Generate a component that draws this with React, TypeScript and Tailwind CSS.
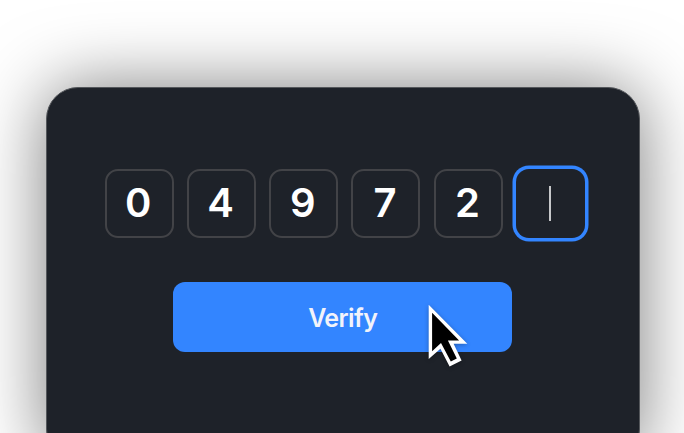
const digits = ["0", "4", "9", "7", "2"];

function Pointer() {
  return (
    <svg
      className="absolute left-[251px] top-[18px] h-[70px] w-[48px] drop-shadow-[0_1px_2px_rgba(0,0,0,0.3)]"
      viewBox="0 0 48 70"
      fill="none"
      aria-hidden="true"
    >
      <path d="M4.7 4.7V59L16.4 48.8L25.6 66.4L37.6 60.6L29.6 43.7H43.3Z" fill="white" />
      <path d="M8.1 12.8V51.2L17 43L26.8 61.6L32.8 58.6L23.9 40.6H35.1Z" fill="black" />
    </svg>
  );
}

export default function App() {
  return (
    <main className="h-[433px] w-full overflow-hidden bg-white pl-[46px] pt-[87px] font-['Inter',sans-serif]">
      <section className="flex h-[374px] w-[593.5px] flex-col items-center rounded-[32px] border border-[#54575b] bg-[#1e2229] pt-[81px] shadow-[0_1px_72px_rgba(0,0,0,0.52)]">
        <div className="flex gap-[13.3px] pl-[4px]">
          {digits.map((digit) => (
            <div
              key={digit}
              className="flex h-[69px] w-[69px] items-center justify-center rounded-[13px] border-2 border-[#424347] pr-[1.5px] pb-[2px] text-[40px] leading-none font-semibold text-white"
            >
              {digit}
            </div>
          ))}
          <div className="flex h-[69px] w-[69px] items-center justify-center rounded-[13px] ring-[3.5px] ring-[#3385ff]">
            <span className="h-[35px] w-[2px] bg-white/75" />
          </div>
        </div>
        <button className="relative mt-[44px] h-[69.5px] w-[339px] rounded-[12px] bg-[#3385ff] pt-[3px] text-[25px] font-[560] tracking-[-0.6px] text-[#f2f3fa]">
          Verify
          <Pointer />
        </button>
      </section>
    </main>
  );
}
